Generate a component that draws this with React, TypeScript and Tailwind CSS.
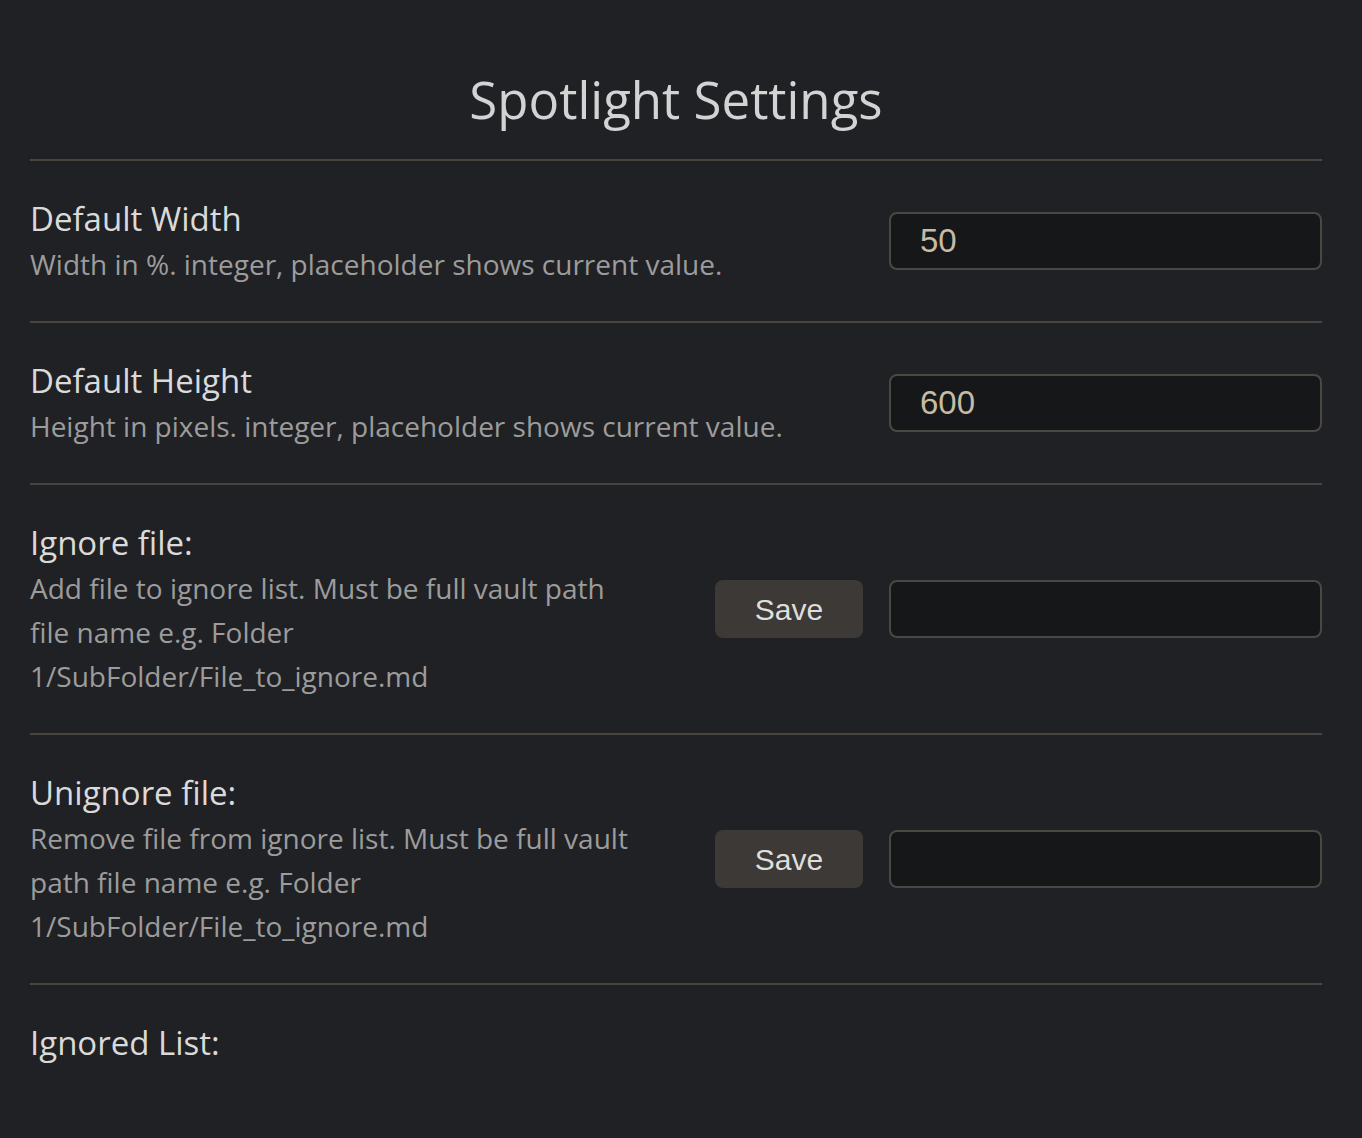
const font = { fontFamily: '"Open Sans", "DejaVu Sans", sans-serif' };

type RowProps = {
  name: string;
  desc: string[];
  value?: string;
  withButton?: boolean;
};

function SettingRow({ name, desc, value, withButton }: RowProps) {
  return (
    <div className="flex items-center border-t-2 border-[#49443f] py-[35px]">
      <div className={withButton ? 'w-[660px] shrink-0' : 'flex-1'}>
        <div className="text-[33px] leading-[46px] text-[#dadada]">{name}</div>
        <div className="text-[28px] leading-[44px] text-[#9c9c9c]">
          {desc.map((line) => (
            <div key={line}>{line}</div>
          ))}
        </div>
      </div>
      <div className="ml-auto flex items-center gap-[26px]">
        {withButton && (
          <button className="h-[58px] w-[148px] rounded-[8px] bg-[#3c3936] font-['Liberation_Sans',Arial,sans-serif] text-[30px] text-[#dedede]">
            Save
          </button>
        )}
        <input
          className="h-[58px] w-[433px] rounded-[8px] border-2 border-[#4b4743] bg-[#161719] px-[29px] font-['Liberation_Sans',Arial,sans-serif] text-[33px] text-[#c6bba4] outline-none"
          defaultValue={value}
        />
      </div>
    </div>
  );
}

export default function App() {
  return (
    <div className="min-h-[1138px] w-full bg-[#202124] pl-[30px] pr-[40px] pt-[68px]" style={font}>
      <h1 className="mb-[29px] text-center text-[51px] leading-[62px] text-[#d3d3d3]">
        Spotlight Settings
      </h1>
      <SettingRow
        name="Default Width"
        desc={['Width in %. integer, placeholder shows current value.']}
        value="50"
      />
      <SettingRow
        name="Default Height"
        desc={['Height in pixels. integer, placeholder shows current value.']}
        value="600"
      />
      <SettingRow
        name="Ignore file:"
        desc={[
          'Add file to ignore list. Must be full vault path',
          'file name e.g. Folder',
          '1/SubFolder/File_to_ignore.md',
        ]}
        withButton
      />
      <SettingRow
        name="Unignore file:"
        desc={[
          'Remove file from ignore list. Must be full vault',
          'path file name e.g. Folder',
          '1/SubFolder/File_to_ignore.md',
        ]}
        withButton
      />
      <div className="border-t-2 border-[#49443f] py-[35px]">
        <div className="text-[33px] leading-[46px] text-[#dadada]">Ignored List:</div>
      </div>
    </div>
  );
}
